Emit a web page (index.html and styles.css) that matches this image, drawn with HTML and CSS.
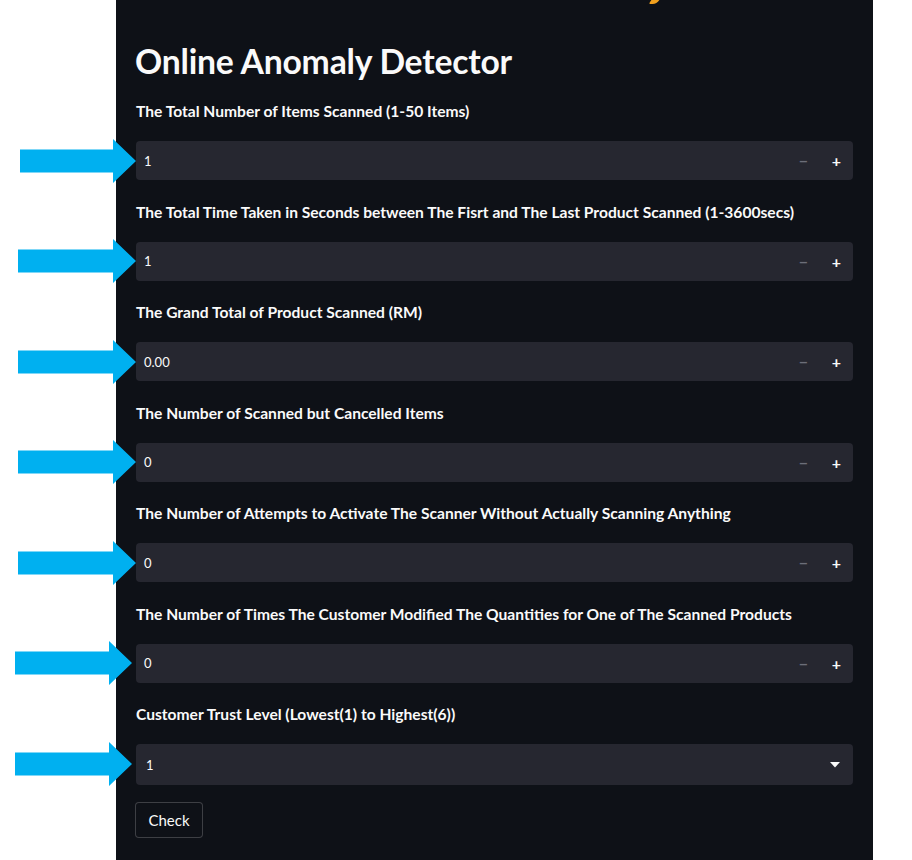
FILE: index.html
```html
<!DOCTYPE html>
<html lang="en">
<head>
<meta charset="utf-8">
<title>Online Anomaly Detector</title>
<link rel="stylesheet" href="styles.css">
</head>
<body>
<main class="panel">
  <span class="top-glyph"></span>
  <h1 class="title">Online Anomaly Detector</h1>

  <div class="field">
    <label class="label">The Total Number of Items Scanned (1-50 Items)</label>
    <div class="input">
      <span class="arrow a1"><svg viewBox="0 0 120 44" width="120" height="44"><polygon points="0,10.5 93,10.5 93,0 116,22 93,44 93,33.5 0,33.5" fill="#00b0f0"/></svg></span>
      <span class="value">1</span>
      <span class="step minus">&minus;</span>
      <span class="step plus">+</span>
    </div>
  </div>

  <div class="field">
    <label class="label">The Total Time Taken in Seconds between The Fisrt and The Last Product Scanned (1-3600secs)</label>
    <div class="input">
      <span class="arrow a2"><svg viewBox="0 0 120 44" width="120" height="44"><polygon points="0,10.5 95,10.5 95,0 118,22 95,44 95,33.5 0,33.5" fill="#00b0f0"/></svg></span>
      <span class="value">1</span>
      <span class="step minus">&minus;</span>
      <span class="step plus">+</span>
    </div>
  </div>

  <div class="field">
    <label class="label">The Grand Total of Product Scanned (RM)</label>
    <div class="input">
      <span class="arrow a2"><svg viewBox="0 0 120 44" width="120" height="44"><polygon points="0,10.5 95,10.5 95,0 118,22 95,44 95,33.5 0,33.5" fill="#00b0f0"/></svg></span>
      <span class="value">0.00</span>
      <span class="step minus">&minus;</span>
      <span class="step plus">+</span>
    </div>
  </div>

  <div class="field">
    <label class="label">The Number of Scanned but Cancelled Items</label>
    <div class="input">
      <span class="arrow a2"><svg viewBox="0 0 120 44" width="120" height="44"><polygon points="0,10.5 95,10.5 95,0 118,22 95,44 95,33.5 0,33.5" fill="#00b0f0"/></svg></span>
      <span class="value">0</span>
      <span class="step minus">&minus;</span>
      <span class="step plus">+</span>
    </div>
  </div>

  <div class="field">
    <label class="label">The Number of Attempts to Activate The Scanner Without Actually Scanning Anything</label>
    <div class="input">
      <span class="arrow a2"><svg viewBox="0 0 120 44" width="120" height="44"><polygon points="0,10.5 95,10.5 95,0 118,22 95,44 95,33.5 0,33.5" fill="#00b0f0"/></svg></span>
      <span class="value">0</span>
      <span class="step minus">&minus;</span>
      <span class="step plus">+</span>
    </div>
  </div>

  <div class="field">
    <label class="label">The Number of Times The Customer Modified The Quantities for One of The Scanned Products</label>
    <div class="input">
      <span class="arrow a3"><svg viewBox="0 0 120 44" width="120" height="44"><polygon points="0,10.5 94,10.5 94,0 117,22 94,44 94,33.5 0,33.5" fill="#00b0f0"/></svg></span>
      <span class="value">0</span>
      <span class="step minus">&minus;</span>
      <span class="step plus">+</span>
    </div>
  </div>

  <div class="field">
    <label class="label">Customer Trust Level (Lowest(1) to Highest(6))</label>
    <div class="input select">
      <span class="arrow a3"><svg viewBox="0 0 120 44" width="120" height="44"><polygon points="0,10.5 94,10.5 94,0 117,22 94,44 94,33.5 0,33.5" fill="#00b0f0"/></svg></span>
      <span class="value">1</span>
      <span class="caret"><svg viewBox="0 0 10 6" width="10" height="6"><polygon points="0,0 10,0 5,5.5" fill="#fafafa"/></svg></span>
    </div>
  </div>

  <button class="btn" type="button">Check</button>
</main>
</body>
</html>
```

FILE: styles.css
```css
html, body {
  margin: 0;
  padding: 0;
  background: #ffffff;
}

body {
  font-family: "Lato", "Noto Sans", sans-serif;
  color: #fafafa;
}

.panel {
  position: relative;
  box-sizing: border-box;
  width: 757px;
  min-height: 860px;
  margin-left: 116px;
  background: #0e1117;
  padding: 40px 20px 20px;
}

.top-glyph {
  position: absolute;
  left: 534px;
  top: 0;
  width: 8px;
  height: 4px;
  background: #f0a01e;
  border-radius: 0 0 4px 2px;
  transform: skewX(-35deg);
}

.title {
  margin: 0 0 0 -1px;
  font-size: 33.7px;
  font-weight: 700;
  line-height: 42px;
  letter-spacing: -0.2px;
}

.field {
  display: flex;
  flex-direction: column;
}

.title + .field .label {
  margin-top: 19px;
}

.label {
  font-size: 15.6px;
  font-weight: 700;
  line-height: 20px;
  margin: 0;
  margin-bottom: 20px;
}

.field + .field .label {
  margin-top: 21.5px;
}

.input {
  position: relative;
  display: flex;
  align-items: center;
  height: 39px;
  background: #262730;
  border-radius: 4px;
  padding: 0 0 0 8px;
  font-size: 13px;
}

.select {
  height: 41px;
  padding-left: 10px;
}

.value {
  flex: 1;
}

.step {
  width: 33px;
  text-align: center;
  font-size: 16px;
  font-weight: 700;
}

.minus {
  color: #6c6e79;
}

.plus {
  color: #fafafa;
}

.caret {
  display: flex;
  margin-right: 13px;
}

.arrow {
  position: absolute;
  top: -2.5px;
  display: flex;
}

.a1 { left: -116px; }
.a2 { left: -118px; }
.a3 { left: -121px; }

.btn {
  margin-top: 17px;
  margin-left: -1px;
  font-family: inherit;
  font-size: 15px;
  color: #fafafa;
  background: #0e1117;
  border: 1px solid rgba(250, 250, 250, 0.2);
  border-radius: 4px;
  width: 68px;
  height: 36px;
  padding: 0;
}
```
